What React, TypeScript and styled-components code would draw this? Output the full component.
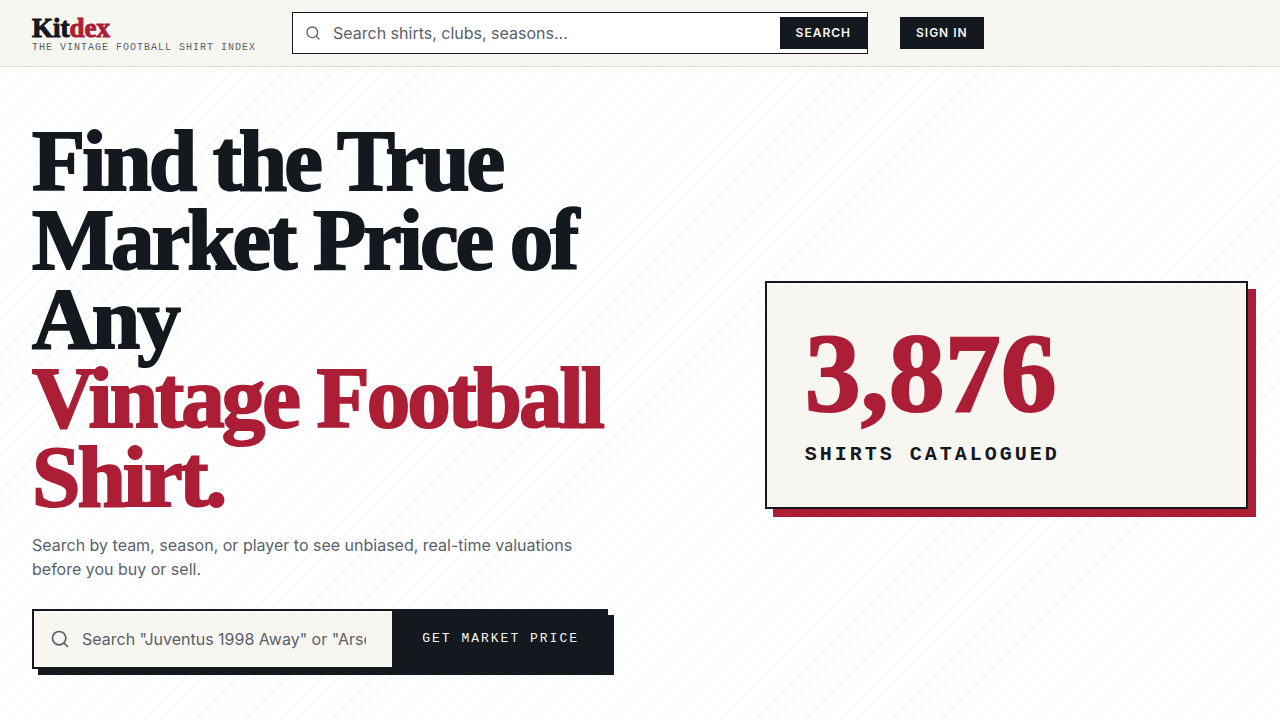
import React from "react";
import styled, { createGlobalStyle, css } from "styled-components";

const ink = "#14181f";
const paper = "#f7f6f1";
const crimson = "#ab1e36";
const slate = "#5a5f6b";
const sans = `Inter, "Liberation Sans", sans-serif`;
const serif = `"Liberation Serif", serif`;
const mono = `"Liberation Mono", monospace`;

const GlobalStyle = createGlobalStyle`
  *, *::before, *::after { box-sizing: border-box; }
  body { margin: 0; background: #fff; color: ${ink}; font-family: ${sans}; font-size: 16px; line-height: 24px; }
  button, input { font: inherit; border-radius: 0; }
  h1, p { margin: 0; }
`;

const Page = styled.div`
  display: flex;
  flex-direction: column;
  min-height: 100vh;
`;

const Header = styled.header`
  display: flex;
  align-items: center;
  gap: 32px;
  padding: 12px 32px;
  background: ${paper};
  border-bottom: 1px solid #dbd9c8;
`;

const Brand = styled.a`
  display: flex;
  flex-direction: column;
  flex: none;
  min-width: 228px;
  padding-top: 2px;
  color: ${ink};
  text-decoration: none;
`;

const Wordmark = styled.span`
  font: 700 27px/28px ${serif};
  -webkit-text-stroke: 1px currentColor;
`;

const Accent = styled.span`
  color: ${crimson};
`;

const Tagline = styled.span`
  font: 400 10px/12px ${mono};
  letter-spacing: 1px;
  text-transform: uppercase;
  white-space: nowrap;
  color: ${slate};
`;

const fieldInput = css`
  flex: 1;
  min-width: 0;
  padding: 0;
  border: 0;
  outline: 0;
  background: transparent;
  color: ${ink};
  &::placeholder { color: ${slate}; opacity: 1; }
`;

const HeaderSearch = styled.form`
  display: flex;
  align-items: center;
  flex: 0 1 576px;
  height: 42px;
  padding-left: 12px;
  background: #fff;
  border: 1px solid ${ink};
`;

const HeaderInput = styled.input`
  ${fieldInput}
  margin-left: 12px;
`;

const SmallButton = styled.button`
  flex: none;
  height: 32px;
  padding: 0 16px;
  border: 0;
  background: ${ink};
  color: ${paper};
  font-size: 12px;
  font-weight: 600;
  line-height: 16px;
  letter-spacing: 1px;
  text-transform: uppercase;
`;

const Hero = styled.main`
  flex: 1;
  display: grid;
  grid-template-columns: minmax(0, 7fr) minmax(0, 5fr);
  gap: 56px;
  align-items: center;
  padding: 54px 32px 51px;
  background: repeating-linear-gradient(-45deg, transparent 0 11px, rgba(20, 24, 31, 0.04) 11px 12px);
`;

const Pitch = styled.section`
  max-width: 576px;
`;

const Title = styled.h1`
  font: 700 87px/79px ${serif};
  letter-spacing: -3px;
  -webkit-text-stroke: 2px currentColor;
`;

const TitleAccent = styled.span`
  display: block;
  color: ${crimson};
`;

const Lead = styled.p`
  margin-top: 17px;
  color: ${slate};
`;

const HeroSearch = styled.form`
  display: flex;
  height: 60px;
  margin-top: 28px;
  background: ${paper};
  border: 2px solid ${ink};
  box-shadow: 6px 6px 0 ${ink};
`;

const HeroField = styled.label`
  display: flex;
  align-items: center;
  gap: 12px;
  flex: 1;
  min-width: 0;
  padding: 0 26px 0 16px;
`;

const HeroInput = styled.input`
  ${fieldInput}
`;

const HeroButton = styled.button`
  flex: none;
  padding: 0 27px 0 30px;
  border: 0;
  background: ${ink};
  color: ${paper};
  font: 400 13px/16px ${mono};
  letter-spacing: 2px;
  text-transform: uppercase;
`;

const StatCard = styled.aside`
  padding: 38px;
  background: ${paper};
  border: 2px solid ${ink};
  box-shadow: 8px 8px 0 ${crimson};
`;

const StatValue = styled.p`
  font: 700 112px/104px ${serif};
  color: ${crimson};
  -webkit-text-stroke: 2px currentColor;
`;

const StatLabel = styled.p`
  margin-top: 16px;
  font: 700 20px/28px ${mono};
  letter-spacing: 3px;
  text-transform: uppercase;
`;

const Glass = styled.svg`
  flex: none;
  fill: none;
  stroke: ${slate};
  stroke-linecap: round;
  stroke-linejoin: round;
`;

function SearchIcon({ size }: { size: number }) {
  return (
    <Glass width={size} height={size} viewBox="0 0 24 24" strokeWidth={2} aria-hidden="true">
      <circle cx="11" cy="11" r="8" />
      <path d="m21 21-4.3-4.3" />
    </Glass>
  );
}

export default function App() {
  return (
    <Page>
      <GlobalStyle />
      <Header>
        <Brand href="#">
          <Wordmark>Kit<Accent>dex</Accent></Wordmark>
          <Tagline>The Vintage Football Shirt Index</Tagline>
        </Brand>
        <HeaderSearch role="search" onSubmit={(e) => e.preventDefault()}>
          <SearchIcon size={16} />
          <HeaderInput type="text" aria-label="Search shirts" placeholder="Search shirts, clubs, seasons…" />
          <SmallButton type="submit">Search</SmallButton>
        </HeaderSearch>
        <SmallButton type="button">Sign in</SmallButton>
      </Header>
      <Hero>
        <Pitch>
          <Title>
            Find the True Market Price of Any
            <TitleAccent>Vintage Football Shirt.</TitleAccent>
          </Title>
          <Lead>Search by team, season, or player to see unbiased, real-time valuations before you buy or sell.</Lead>
          <HeroSearch onSubmit={(e) => e.preventDefault()}>
            <HeroField>
              <SearchIcon size={20} />
              <HeroInput type="text" aria-label="Search for a shirt" placeholder={'Search "Juventus 1998 Away" or "Arsenal 1991"'} />
            </HeroField>
            <HeroButton type="submit">Get market price</HeroButton>
          </HeroSearch>
        </Pitch>
        <StatCard>
          <StatValue>3,876</StatValue>
          <StatLabel>Shirts catalogued</StatLabel>
        </StatCard>
      </Hero>
    </Page>
  );
}
